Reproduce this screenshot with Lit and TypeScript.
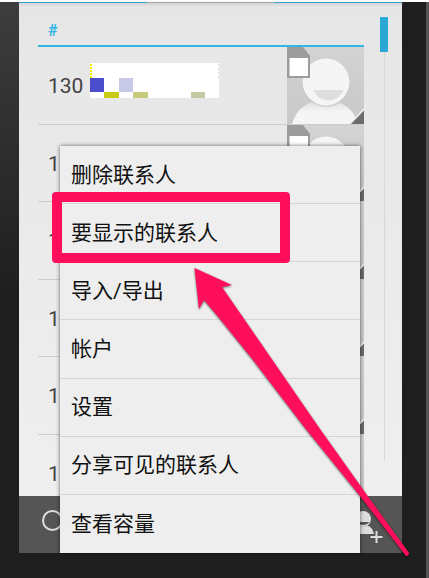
import { LitElement, html, svg, css } from "lit";
import { customElement, property } from "lit/decorators.js";
import { classMap } from "lit/directives/class-map.js";

@customElement("contact-avatar")
class ContactAvatar extends LitElement {
  static styles = css`
    :host { display: block; flex: none; width: 77px; height: 77px; }
    svg { display: block; width: 100%; height: 100%; }
  `;
  render() {
    return html`<svg viewBox="0 0 77 77" aria-hidden="true">
      <defs>
        <linearGradient id="back" x1="0" y1="0" x2="0" y2="1">
          <stop offset="0" stop-color="#d3d3d3" />
          <stop offset="1" stop-color="#c8c8c8" />
        </linearGradient>
        <linearGradient id="body" x1="0" y1="0" x2="0" y2="1">
          <stop offset="0" stop-color="#dcdcdc" />
          <stop offset=".5" stop-color="#f5f5f5" />
        </linearGradient>
      </defs>
      <rect width="77" height="77" fill="url(#back)" />
      <path d="M5 77C9 62 21 53 38 53s29 9 33 24z" fill="url(#body)" />
      <circle cx="39" cy="36" r="24" fill="#bbb" opacity=".5" />
      <circle cx="39" cy="35" r="23.5" fill="#f5f5f5" />
      <path d="M26 43h31c-4 7-9 10.500-15.500 10.500S30 50 26 43z" fill="#dedede" />
      <path d="M0 0h16l7 9v22H0z" fill="#9c9c9c" />
      <rect x="2.500" y="11" width="18.500" height="18" fill="#fff" />
      <path d="M62 77l15-16v16z" fill="#f0f0f0" />
      <path d="M64 77l13-13.500v13.500z" fill="#6c6c6c" />
    </svg>`;
  }
}

@customElement("contact-row")
class ContactRow extends LitElement {
  @property() number = "";
  @property({ type: Boolean }) masked = false;
  static styles = css`
    :host { display: flex; align-items: center; justify-content: space-between; border-bottom: 1px solid #cdcdcd; overflow: hidden; box-sizing: border-box; }
    .name { display: flex; align-items: center; gap: 7px; padding-left: 10px; font-size: 21px; line-height: 36px; color: #444; }
    .mask { display: block; width: 129px; height: 35px; margin-bottom: 10px; }
    .plain { display: block; padding-top: 2px; }
    contact-avatar { align-self: flex-start; }
  `;
  render() {
    return html`<span class="name"><span class="plain">${this.number}</span>
      ${this.masked
        ? html`<svg class="mask" viewBox="0 0 129 35" aria-hidden="true">
            <rect width="129" height="35" fill="#fff" />
            <path d="M1 1v14" stroke="#f2f200" stroke-width="2" stroke-dasharray="2 1" />
            <path d="M128.500 1v14" stroke="#e0e0e0" stroke-dasharray="2 2" />
            <rect y="15" width="14" height="14" fill="#4b4dcc" />
            <rect x="29" y="15" width="14" height="14" fill="#c8c9e8" />
            <rect x="14" y="29" width="15" height="6" fill="#c8cb16" />
            <rect x="43" y="29" width="15" height="6" fill="#c6ca7c" />
            <rect x="101" y="29" width="14" height="6" fill="#c4c9a4" />
          </svg>`
        : ""}</span>
      <contact-avatar></contact-avatar>`;
  }
}

@customElement("app-root")
class AppRoot extends LitElement {
  private contacts = ["130", "1", "1", "1", "1", "1"];
  private actions = ["删除联系人", "要显示的联系人", "导入/导出", "帐户", "设置", "分享可见的联系人", "查看容量"];

  static styles = css`
    :host { display: flex; min-height: 100vh; box-sizing: border-box; padding: 2px 3px 0 0;
      background: linear-gradient(#fff 2px, #555 2px); font-family: Roboto, "Noto Sans CJK SC", sans-serif; }
    .phone { flex: 1; min-width: 0; padding: 0 24px 25px 19px; background: linear-gradient(#3d3d3d, #1e1e1e 300px) left / 19px 100% no-repeat, #1e1e1e; }
    .screen { position: relative; display: flex; flex-direction: column; background: linear-gradient(#e6e6e6, #f0f0f0); }
    .tabs { display: grid; grid-template-columns: 1fr 1fr 1fr; height: 1px; background: #33a5d0; box-shadow: 0 1px 3px #aaa; }
    .tabs .current { grid-column: 2; background: #aaa; }
    .list { display: flex; flex-direction: column; padding: 0 38px 0 19px; overflow: hidden; height: 493px; }
    .letter { margin: 0; padding: 18px 10px 4px; border-bottom: 2px solid #33b5e5; color: #33b5e5; font-size: 16px; line-height: 20px; font-weight: 700; }
    .rows { display: grid; grid-auto-rows: 1fr; flex: none; height: 465px; }
    .track { position: absolute; top: 15px; right: 14px; width: 8px; height: 444px; background: linear-gradient(#d8d8d8, #d8d8d8) center / 1px 100% no-repeat; }
    .thumb { height: 35px; border-radius: 1px; background: #29a8d5; }
    .bar { display: flex; justify-content: space-between; height: 57px; padding: 0 16px; background: #555; }
    .tool { width: 48px; padding: 0; border: 0; background: none; }
    .tool svg { display: block; width: 48px; height: 57px; }
    .menu { position: absolute; left: 41px; right: 42px; bottom: 0; display: grid; grid-auto-rows: 1fr; height: 407px; background: #eee; box-shadow: 0 0 4px rgba(0, 0, 0, .6); }
    .action { position: relative; display: block; width: 100%; padding: 0 11px; border: 0; border-bottom: 1px solid #d5d5d5; background: none;
      color: #111; font-family: inherit; font-size: 21px; line-height: 32px; text-align: left; }
    .action:last-child { border-bottom: 0; }
    .marked::after { content: ""; position: absolute; left: -8px; right: 70px; top: -12px; bottom: -2px; border: 10px solid #ff0f5b; border-radius: 4px; }
    .arrow { position: absolute; right: -12px; bottom: -8px; width: 226px; height: 298px; filter: drop-shadow(0 1px 1px rgba(0, 0, 0, .6)); pointer-events: none; }
  `;

  private arrow() {
    return svg`<path d="M6.500 5L44 22 34 24 132 166 179 232 221 290Q221 293 218 293L172 233 117 165 65 97 32 56 16 37 11 46z" fill="#ff0f5b" />`;
  }

  render() {
    return html`<div class="phone">
      <main class="screen">
        <div class="tabs"><span class="current"></span></div>
        <section class="list">
          <h2 class="letter">#</h2>
          <div class="rows">
            ${this.contacts.map((n, i) => html`<contact-row .number=${n} .masked=${i === 0}></contact-row>`)}
          </div>
        </section>
        <div class="track"><div class="thumb"></div></div>
        <footer class="bar">
          <button class="tool" aria-label="搜索">
            <svg viewBox="0 0 48 57" fill="none" stroke="#ddd" stroke-width="2">
              <circle cx="17.500" cy="24.500" r="9.5" />
              <path d="M26 33l8 8" stroke-width="3" />
            </svg>
          </button>
          <button class="tool" aria-label="添加联系人">
            <svg viewBox="0 0 48 57">
              <circle cx="25" cy="23" r="8" fill="#ddd" />
              <path d="M18.500 26h13c-3 4-10 4-13 0z" fill="#555" />
              <path d="M13 38c1-6 5-8 8-8.500 2 2 6 2 8 0 4 1 6 4 7 8.500z" fill="#ddd" />
              <path d="M38.500 34v14M31.500 41h14" stroke="#555" stroke-width="5" />
              <path d="M38.500 35v12M32.500 41h12" stroke="#ddd" stroke-width="2" />
            </svg>
          </button>
        </footer>
        <nav class="menu">
          ${this.actions.map((a, i) => html`<button class=${classMap({ action: true, marked: i === 1 })}>${a}</button>`)}
        </nav>
        <svg class="arrow" viewBox="0 0 226 298" aria-hidden="true">${this.arrow()}</svg>
      </main>
    </div>`;
  }
}
